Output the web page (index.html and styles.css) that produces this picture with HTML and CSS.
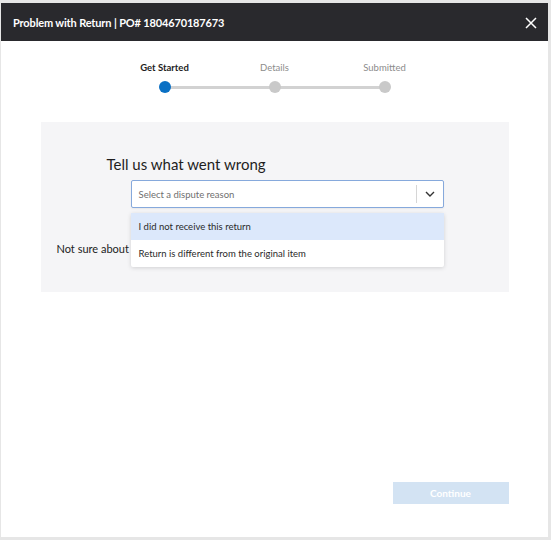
FILE: index.html
```html
<!DOCTYPE html>
<html>
<head>
<meta charset="utf-8">
<link rel="stylesheet" href="styles.css">
</head>
<body>
<div class="modal">
  <div class="header">
    <span class="title">Problem with Return | PO# 1804670187673</span>
    <svg class="close" width="12" height="12" viewBox="0 0 12 12"><path d="M1 1L11 11M11 1L1 11" stroke="#fff" stroke-width="1.5" fill="none"/></svg>
  </div>
  <div class="stepper">
    <div class="labels">
      <span class="lbl active">Get Started</span>
      <span class="lbl">Details</span>
      <span class="lbl">Submitted</span>
    </div>
    <div class="track">
      <span class="dot active"></span>
      <span class="dot"></span>
      <span class="dot"></span>
    </div>
  </div>
  <div class="panel">
    <h2 class="heading">Tell us what went wrong</h2>
    <div class="select-wrap">
      <div class="select">
        <span class="placeholder">Select a dispute reason</span>
        <span class="sep"></span>
        <svg class="chev" width="10" height="6" viewBox="0 0 10 6"><path d="M1 1L5 5L9 1" stroke="#333" stroke-width="1.4" fill="none"/></svg>
      </div>
      <ul class="menu">
        <li class="opt hover">I did not receive this return</li>
        <li class="opt">Return is different from the original item</li>
      </ul>
    </div>
    <p class="hint">Not sure about which reason to choose?</p>
  </div>
  <div class="footer">
    <button class="continue">Continue</button>
  </div>
</div>
</body>
</html>
```
FILE: styles.css
```css
html, body { margin: 0; padding: 0; }
body {
  background: #e6e6e6;
  font-family: Lato, "Open Sans", sans-serif;
  width: 551px;
  height: 540px;
  overflow: hidden;
}
.modal {
  margin: 3px 3px 3px 1px;
  height: 534px;
  background: #fff;
  display: flex;
  flex-direction: column;
}
.header {
  height: 38px;
  background: #29292d;
  color: #fff;
  display: flex;
  align-items: center;
  justify-content: space-between;
  padding: 0 11px 0 12px;
  flex: none;
}
.title { font-size: 11px; font-weight: 700; letter-spacing: -0.15px; }
.close { margin-top: 1px; }
.stepper {
  width: 330px;
  margin: 20px auto 0;
}
.labels {
  display: grid;
  grid-template-columns: repeat(3, 1fr);
  text-align: center;
  font-size: 9.5px;
  line-height: 14px;
}
.lbl { color: #8c8c8c; }
.lbl.active { color: #1e1e1e; font-weight: 700; }
.track {
  position: relative;
  margin: 6px 49px 0;
  height: 12px;
  display: flex;
  justify-content: space-between;
  align-items: center;
}
.track::before {
  content: "";
  position: absolute;
  left: 6px; right: 6px; top: 5px;
  height: 3px;
  background: #d2d2d2;
}
.dot {
  position: relative;
  width: 12px; height: 12px;
  border-radius: 50%;
  background: #c9c9c9;
}
.dot.active { background: #0a70c4; }
.panel {
  width: 468px;
  height: 170px;
  margin: 29px auto 0;
  background: #f5f5f7;
  box-sizing: border-box;
  padding-top: 32px;
  position: relative;
}
.heading {
  margin: 0 0 6px 66px;
  font-size: 15px;
  font-weight: 400;
  color: #1e1e1e;
  line-height: 20px;
}
.select-wrap {
  position: relative;
  margin-left: 90px;
  width: 313px;
}
.select {
  height: 28px;
  box-sizing: border-box;
  border: 1px solid #86a9dc;
  border-radius: 2px;
  background: #fff;
  display: flex;
  align-items: center;
  padding-left: 7px;
  box-shadow: 0 1px 2px rgba(0,0,0,0.06);
}
.placeholder { font-size: 9.5px; color: #6f6f6f; flex: 1; }
.sep { width: 1px; height: 18px; background: #d6d6d6; }
.chev { margin: 0 8px 0 8px; }
.menu {
  position: absolute;
  top: 33px; left: 0; right: 0;
  margin: 0; padding: 0;
  list-style: none;
  background: #fff;
  border-radius: 2px;
  box-shadow: 0 1px 4px rgba(0,0,0,0.15);
  z-index: 2;
}
.opt {
  height: 27px;
  line-height: 27px;
  padding-left: 8px;
  font-size: 9.5px;
  color: #2a2a2a;
}
.opt.hover { background: #dce8fb; }
.hint {
  margin: 34px 0 0 16px;
  font-size: 11px;
  color: #222;
  line-height: 14px;
}
.footer {
  width: 468px;
  margin: auto auto 33px;
  display: flex;
  justify-content: flex-end;
}
.continue {
  width: 116px;
  height: 22px;
  border: none;
  background: #d3e3f3;
  color: #fff;
  font-family: inherit;
  font-size: 10px;
  font-weight: 700;
  padding: 0;
}
```
